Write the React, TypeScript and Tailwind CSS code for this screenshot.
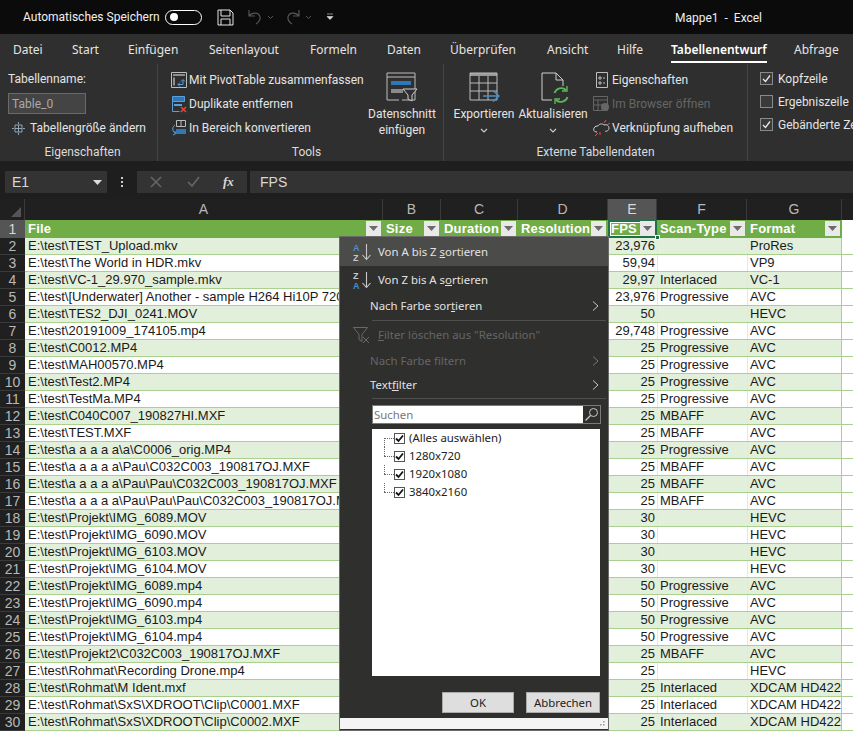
import type { ReactNode } from "react";

const noto = "font-['Noto_Sans',sans-serif]";
const ui = "font-['Roboto',sans-serif]";

type Row = { n: number; file: string; fps: string; scan: string; format: string };

const rows: Row[] = [
  { n: 2, file: "E:\\test\\TEST_Upload.mkv", fps: "23,976", scan: "", format: "ProRes" },
  { n: 3, file: "E:\\test\\The World in HDR.mkv", fps: "59,94", scan: "", format: "VP9" },
  { n: 4, file: "E:\\test\\VC-1_29.970_sample.mkv", fps: "29,97", scan: "Interlaced", format: "VC-1" },
  { n: 5, file: "E:\\test\\[Underwater] Another - sample H264 Hi10P 720p.mkv", fps: "23,976", scan: "Progressive", format: "AVC" },
  { n: 6, file: "E:\\test\\TES2_DJI_0241.MOV", fps: "50", scan: "", format: "HEVC" },
  { n: 7, file: "E:\\test\\20191009_174105.mp4", fps: "29,748", scan: "Progressive", format: "AVC" },
  { n: 8, file: "E:\\test\\C0012.MP4", fps: "25", scan: "Progressive", format: "AVC" },
  { n: 9, file: "E:\\test\\MAH00570.MP4", fps: "25", scan: "Progressive", format: "AVC" },
  { n: 10, file: "E:\\test\\Test2.MP4", fps: "25", scan: "Progressive", format: "AVC" },
  { n: 11, file: "E:\\test\\TestMa.MP4", fps: "25", scan: "Progressive", format: "AVC" },
  { n: 12, file: "E:\\test\\C040C007_190827HI.MXF", fps: "25", scan: "MBAFF", format: "AVC" },
  { n: 13, file: "E:\\test\\TEST.MXF", fps: "25", scan: "MBAFF", format: "AVC" },
  { n: 14, file: "E:\\test\\a a a a a\\a\\C0006_orig.MP4", fps: "25", scan: "Progressive", format: "AVC" },
  { n: 15, file: "E:\\test\\a a a a a\\Pau\\C032C003_190817OJ.MXF", fps: "25", scan: "MBAFF", format: "AVC" },
  { n: 16, file: "E:\\test\\a a a a a\\Pau\\Pau\\C032C003_190817OJ.MXF", fps: "25", scan: "MBAFF", format: "AVC" },
  { n: 17, file: "E:\\test\\a a a a a\\Pau\\Pau\\Pau\\C032C003_190817OJ.MXF", fps: "25", scan: "MBAFF", format: "AVC" },
  { n: 18, file: "E:\\test\\Projekt\\IMG_6089.MOV", fps: "30", scan: "", format: "HEVC" },
  { n: 19, file: "E:\\test\\Projekt\\IMG_6090.MOV", fps: "30", scan: "", format: "HEVC" },
  { n: 20, file: "E:\\test\\Projekt\\IMG_6103.MOV", fps: "30", scan: "", format: "HEVC" },
  { n: 21, file: "E:\\test\\Projekt\\IMG_6104.MOV", fps: "30", scan: "", format: "HEVC" },
  { n: 22, file: "E:\\test\\Projekt\\IMG_6089.mp4", fps: "50", scan: "Progressive", format: "AVC" },
  { n: 23, file: "E:\\test\\Projekt\\IMG_6090.mp4", fps: "50", scan: "Progressive", format: "AVC" },
  { n: 24, file: "E:\\test\\Projekt\\IMG_6103.mp4", fps: "50", scan: "Progressive", format: "AVC" },
  { n: 25, file: "E:\\test\\Projekt\\IMG_6104.mp4", fps: "50", scan: "Progressive", format: "AVC" },
  { n: 26, file: "E:\\test\\Projekt2\\C032C003_190817OJ.MXF", fps: "25", scan: "MBAFF", format: "AVC" },
  { n: 27, file: "E:\\test\\Rohmat\\Recording Drone.mp4", fps: "25", scan: "", format: "HEVC" },
  { n: 28, file: "E:\\test\\Rohmat\\M Ident.mxf", fps: "25", scan: "Interlaced", format: "XDCAM HD422" },
  { n: 29, file: "E:\\test\\Rohmat\\SxS\\XDROOT\\Clip\\C0001.MXF", fps: "25", scan: "Interlaced", format: "XDCAM HD422" },
  { n: 30, file: "E:\\test\\Rohmat\\SxS\\XDROOT\\Clip\\C0002.MXF", fps: "25", scan: "Interlaced", format: "XDCAM HD422" },
];

const tabs = [
  { label: "Datei", w: "w-[59px]" },
  { label: "Start", w: "w-[56px]" },
  { label: "Einfügen", w: "w-[81px]" },
  { label: "Seitenlayout", w: "w-[101px]" },
  { label: "Formeln", w: "w-[77px]" },
  { label: "Daten", w: "w-[63px]" },
  { label: "Überprüfen", w: "w-[97px]" },
  { label: "Ansicht", w: "w-[70px]" },
  { label: "Hilfe", w: "w-[54px]" },
  { label: "Tabellenentwurf", w: "w-[123px]", active: true },
  { label: "Abfrage", w: "w-[59px]" },
];

const columns = [
  { label: "A", w: "w-[358px]" },
  { label: "B", w: "w-[58px]" },
  { label: "C", w: "w-[77px]" },
  { label: "D", w: "w-[90px]" },
  { label: "E", w: "w-[49px]", active: true },
  { label: "F", w: "w-[90px]" },
  { label: "G", w: "w-[95px]" },
];

const FilterButton = () => (
  <span className="absolute right-[2px] top-[1px] flex h-[15px] w-[15px] items-center justify-center bg-[#e9e9e9]">
    <svg width="9" height="5" viewBox="0 0 9 5">
      <path d="M0 0h9L4.5 5z" fill="#6b6b6b" />
    </svg>
  </span>
);

const HeaderCell = ({ label, w, selected }: { label: string; w: string; selected?: boolean }) => (
  <div
    className={`relative flex h-full ${w} items-center overflow-hidden pl-[3px] text-[13px] font-bold tracking-[0.2px] text-white ${
      selected ? "shadow-[inset_0_0_0_2px_#1f7246,inset_0_0_0_3px_#ffffff]" : ""
    }`}
  >
    {label}
    <FilterButton />
  </div>
);

const ToolRow = ({ icon, children, dim }: { icon: ReactNode; children: ReactNode; dim?: boolean }) => (
  <div className={`flex h-[24px] items-center gap-[2px] whitespace-nowrap ${dim ? "text-[#666]" : ""}`}>
    <span className="flex w-[17px] justify-center">{icon}</span>
    {children}
  </div>
);

const RibbonCheck = ({ label, checked }: { label: string; checked: boolean }) => (
  <div className="flex h-[23px] items-center gap-[5px] whitespace-nowrap">
    <span className="flex h-[13px] w-[13px] items-center justify-center border border-[#8a8a8a] bg-[#3a3a3a]">
      {checked && (
        <svg width="11" height="11" viewBox="0 0 11 11">
          <path d="M2 6l2.5 2.5L9 2.5" fill="none" stroke="#e8e8e8" strokeWidth="1.3" />
        </svg>
      )}
    </span>
    {label}
  </div>
);

const GroupLabel = ({ children }: { children: ReactNode }) => (
  <div className="mt-auto text-center text-[12px] leading-[18px] text-[#dcdcdc]">{children}</div>
);

const Chevron = () => (
  <svg width="8" height="5" viewBox="0 0 8 5" className="mt-[6px]">
    <path d="M1 1l3 3 3-3" fill="none" stroke="#cfcfcf" strokeWidth="1.1" />
  </svg>
);

const MenuChevron = ({ dim }: { dim?: boolean }) => (
  <svg width="7" height="11" viewBox="0 0 7 11" className="absolute right-[9px] top-1/2 -translate-y-1/2">
    <path d="M1 1l5 4.5L1 10" fill="none" stroke={dim ? "#777" : "#c8c8c8"} strokeWidth="1" />
  </svg>
);

const SortIcon = ({ top, bottom }: { top: string; bottom: string }) => (
  <svg width="22" height="20" viewBox="0 0 22 20" className="absolute left-[12px] top-1/2 -translate-y-1/2">
    <text x="1" y="8.5" fontSize="9" fontWeight="700" fontFamily="Liberation Sans" fill={top === "A" ? "#4a90c8" : "#c8c8c8"}>
      {top}
    </text>
    <text x="1" y="18.5" fontSize="9" fontWeight="700" fontFamily="Liberation Sans" fill={bottom === "A" ? "#4a90c8" : "#c8c8c8"}>
      {bottom}
    </text>
    <path d="M14.500 2v15M10.500 13l4 4.500 4-4.500" fill="none" stroke="#c8c8c8" strokeWidth="1.1" />
  </svg>
);

const ListCheck = ({ label, first }: { label: string; first?: boolean }) => (
  <div className="relative flex h-[18px] items-center pl-[22px]">
    <span className="absolute left-[12px] top-1/2 w-[10px] border-t border-dotted border-[#666]" />
    <span className={`absolute left-[12px] border-l border-dotted border-[#666] ${first ? "top-1/2 h-[9px]" : "top-0 h-[9px]"}`} />
    <span className="flex h-[11px] w-[11px] items-center justify-center border border-[#555] bg-white">
      <svg width="9" height="9" viewBox="0 0 9 9">
        <path d="M1 4.500L3.500 7 8 1.500" fill="none" stroke="#111" strokeWidth="1.8" />
      </svg>
    </span>
    <span className="ml-[4px]">{label}</span>
  </div>
);

const FilterMenu = () => (
  <div
    className={`${noto} absolute left-[340px] top-[237px] flex h-[493px] w-[268px] flex-col bg-[#2f2f2e] text-[11.4px] text-[#e2e2e2] shadow-[0_0_0_1px_#6a6a6a]`}
  >
    <div className="relative flex h-[29px] items-center bg-[#4b4b4a] pl-[38px]">
      <SortIcon top="A" bottom="Z" />
      <span>
        Von A bis Z <u>s</u>ortieren
      </span>
    </div>
    <div className="relative flex h-[28px] items-center pl-[38px]">
      <SortIcon top="Z" bottom="A" />
      <span>
        Von Z bis A s<u>o</u>rtieren
      </span>
    </div>
    <div className="relative flex h-[24px] items-center pl-[30px]">
      <span>
        Nach Farbe sor<u>t</u>ieren
      </span>
      <MenuChevron />
    </div>
    <div className="ml-[32px] mr-[2px] mt-[2px] border-t border-[#4f4f4f]" />
    <div className="relative flex h-[28px] items-center pl-[38px] text-[#666]">
      <svg width="18" height="18" viewBox="0 0 18 18" className="absolute left-[13px] top-[6px]">
        <path d="M.5.5h14L9 7.500v7l-3-2v-5z" fill="none" stroke="#6a6a6a" />
        <path d="M10 10l6 6m0-6l-6 6" fill="none" stroke="#6a6a6a" />
      </svg>
      <span>
        <u>F</u>ilter löschen aus "Resolution"
      </span>
    </div>
    <div className="relative flex h-[24px] items-center pl-[30px] text-[#666]">
      <span>
        Nach Farbe f<u>i</u>ltern
      </span>
      <MenuChevron dim />
    </div>
    <div className="relative flex h-[24px] items-center pl-[30px]">
      <span>
        Text<u>f</u>ilter
      </span>
      <MenuChevron />
    </div>
    <div className="ml-[32px] mr-[2px] mt-[1px] border-t border-[#4f4f4f]" />
    <div className="ml-[32px] mt-[6px] flex h-[19px] w-[229px] items-center border border-[#7a7a7a] bg-white pl-[1px] text-[#777]">
      <span className="flex-1">Suchen</span>
      <span className="flex h-full w-[17px] items-center justify-center bg-[#2f2f2e]">
        <svg width="15" height="15" viewBox="0 0 15 15">
          <circle cx="9.500" cy="5.500" r="4" fill="none" stroke="#c8c8c8" />
          <path d="M6.500 8.500L1.500 13.500" fill="none" stroke="#c8c8c8" strokeWidth="1.3" />
        </svg>
      </span>
    </div>
    <div className="ml-[32px] mt-[5px] h-[247px] w-[228px] bg-white text-[#222]">
      <ListCheck label="(Alles auswählen)" first />
      <ListCheck label="1280x720" />
      <ListCheck label="1920x1080" />
      <ListCheck label="3840x2160" />
    </div>
    <div className="mt-[16px] flex justify-end gap-[12px] pr-[8px] text-[#222]">
      <div className="flex h-[21px] w-[72px] items-center justify-center border border-[#aaa] bg-[#dedede]">OK</div>
      <div className="flex h-[21px] w-[74px] items-center justify-center border border-[#aaa] bg-[#dedede]">Abbrechen</div>
    </div>
    <div className="relative mt-auto mb-[1px] h-[11px] bg-[#f4f4f4]">
      <svg width="9" height="8" viewBox="0 0 9 8" className="absolute bottom-[1px] right-[2px]">
        <path d="M6 1h1.500v1.500H6zM3 4h1.500v1.500H3zM6 4h1.500v1.500H6z" fill="#999" />
      </svg>
    </div>
  </div>
);

const App = () => {
  return (
    <div className={`${ui} relative h-[731px] w-[853px] overflow-hidden bg-[#202020] text-[12px] text-[#e4e4e4]`}>
      {/* Titelleiste */}
      <div className="relative flex h-[34px] items-center bg-[#0b0b0b] pl-[23px] text-[#f0f0f0]">
        <span className="w-[142px] whitespace-nowrap">Automatisches Speichern</span>
        <span className="flex h-[15px] w-[37px] items-center rounded-full border border-white pl-[4px]">
          <span className="h-[8px] w-[8px] rounded-full bg-white" />
        </span>
        <svg width="17" height="17" viewBox="0 0 17 17" className="ml-[15px]">
          <path d="M1 1h12l3 3v12H1zM4 1v6h9V1M4 16v-6h9v6" fill="none" stroke="#e6e6e6" />
        </svg>
        <svg width="16" height="16" viewBox="0 0 16 16" className="ml-[13px]">
          <path d="M2 1v6h6M2 7c3-4 10-4 11 1 .6 3-1 5-4 7" fill="none" stroke="#555" strokeWidth="1.2" />
        </svg>
        <svg width="7" height="5" viewBox="0 0 7 5" className="ml-[4px]">
          <path d="M1 1l2.500 2.500L6 1" fill="none" stroke="#555" />
        </svg>
        <svg width="16" height="16" viewBox="0 0 16 16" className="ml-[11px]">
          <path d="M14 1v6H8M14 7C11 3 4 3 3 8c-.6 3 1 5 4 7" fill="none" stroke="#555" strokeWidth="1.2" />
        </svg>
        <svg width="7" height="5" viewBox="0 0 7 5" className="ml-[4px]">
          <path d="M1 1l2.500 2.500L6 1" fill="none" stroke="#555" />
        </svg>
        <svg width="8" height="8" viewBox="0 0 8 8" className="ml-[14px]">
          <path d="M1 1h6M1 3.500h6L4 6.500z" fill="#ddd" stroke="#ddd" strokeWidth="0.6" />
        </svg>
        <span className="absolute left-[675px] top-[9px] whitespace-nowrap text-[#eee]">Mappe1 &nbsp;-&nbsp; Excel</span>
      </div>

      {/* Registerkarten */}
      <div className={`${noto} flex h-[30px] items-center bg-[#2f2f2f] pl-[13px] pt-[2px]`}>
        {tabs.map((tab) => (
          <div key={tab.label} className={`${tab.w} shrink-0 whitespace-nowrap`}>
            <span className={`relative inline-block ${tab.active ? "font-semibold text-white" : ""}`}>
              {tab.label}
              {tab.active && <span className="absolute -bottom-[4px] left-0 h-[2px] w-full bg-white" />}
            </span>
          </div>
        ))}
      </div>

      {/* Menüband */}
      <div className="flex h-[97px] bg-[#2f2f2f]">
        <div className="flex w-[158px] shrink-0 flex-col border-r border-[#454545] pl-[8px]">
          <div className="flex h-[29px] items-center">Tabellenname:</div>
          <div className="flex h-[21px] w-[78px] items-center border border-[#6a6a6a] bg-[#444] pl-[3px] text-[#aaa]">Table_0</div>
          <div className="mt-[2px] flex h-[24px] items-center gap-[5px] pl-[4px]">
            <svg width="13" height="13" viewBox="0 0 13 13">
              <path d="M3 3h7v7H3zM6.500 3v7M3 6.500h7M6.500 0v2M6.500 11v2M0 6.500h2M11 6.500h2" fill="none" stroke="#9ab0c4" strokeWidth="0.9" />
            </svg>
            Tabellengröße ändern
          </div>
          <GroupLabel>Eigenschaften</GroupLabel>
        </div>

        <div className="flex w-[286px] shrink-0 flex-col border-r border-[#454545] pl-[12px]">
          <div className="flex flex-1 pt-[4px]">
            <div className="w-[197px]">
              <ToolRow
                icon={
                  <svg width="16" height="16" viewBox="0 0 16 16">
                    <path d="M.5.5h15v15H.5z" fill="none" stroke="#bdbdbd" />
                    <path d="M2 2h12v2H2zM2 5.500h2v8H2z" fill="#8e8e8e" />
                    <path d="M7 12.500h5V8m-2 1.500l2-2 2 2M9 10.500l-2 2 2 2" fill="none" stroke="#5aa0d8" />
                  </svg>
                }
              >
                Mit PivotTable zusammenfassen
              </ToolRow>
              <ToolRow
                icon={
                  <svg width="16" height="17" viewBox="0 0 16 17">
                    <path d="M1.500.5h12v5h-12z" fill="#2f77b8" stroke="#5aa0d8" />
                    <path d="M1.500 5.500v10h7" fill="none" stroke="#5aa0d8" />
                    <path d="M3 8h8v2H3z" fill="#5aa0d8" />
                    <path d="M10 11l5 5m0-5l-5 5" stroke="#e04a3a" strokeWidth="1.500" />
                  </svg>
                }
              >
                Duplikate entfernen
              </ToolRow>
              <ToolRow
                icon={
                  <svg width="16" height="16" viewBox="0 0 16 16">
                    <path d="M5.500.5h9v6h-9zM10 .5v6" fill="none" stroke="#bdbdbd" />
                    <path d="M5 9h10v5H5z" fill="#2f77b8" />
                    <path d="M4 5C1 7 1 11 4 13m-2 2l3-1.500L3.500 11" fill="none" stroke="#5aa0d8" />
                  </svg>
                }
              >
                In Bereich konvertieren
              </ToolRow>
            </div>
            <div className="flex w-[70px] flex-col items-center pt-[4px] text-center leading-[16px]">
              <svg width="32" height="30" viewBox="0 0 32 30" className="mb-[4px]">
                <path d="M1 1h28v27H16M1 28V1M1 5h28" fill="none" stroke="#bdbdbd" />
                <path d="M1 28h12" stroke="#bdbdbd" />
                <path d="M5 9h20v4H5z" fill="#2f77b8" />
                <path d="M5 17h12v4H5z" fill="#8a8a8a" />
                <path d="M17 17h14l-5 6v6l-4-2v-4z" fill="#2f2f2f" stroke="#d0d0d0" />
              </svg>
              <span className="whitespace-nowrap">Datenschnitt</span>
              <span>einfügen</span>
            </div>
          </div>
          <GroupLabel>Tools</GroupLabel>
        </div>

        <div className="flex w-[304px] shrink-0 flex-col border-r border-[#454545]">
          <div className="flex flex-1">
            <div className="ml-[5px] flex w-[70px] flex-col items-center pt-[8px] leading-[16px]">
              <svg width="32" height="32" viewBox="0 0 32 32" className="mb-[2px]">
                <path d="M2 1h27v3H2z" fill="#9a9a9a" />
                <path d="M2 1h27v27H2zM2 11h27M2 19h27M11 4v24M20 4v24" fill="none" stroke="#bdbdbd" />
                <path d="M15 24h16m-6-5.500l6 5.500-6 5.500" fill="none" stroke="#4a90c8" strokeWidth="1.400" />
              </svg>
              <span>Exportieren</span>
              <Chevron />
            </div>
            <div className="flex w-[68px] flex-col items-center pt-[8px] leading-[16px]">
              <svg width="32" height="32" viewBox="0 0 32 32" className="mb-[2px]">
                <path d="M5 15V1h14l7 7v6M5 15v13h10M19 1v7h7" fill="none" stroke="#d0d0d0" />
                <path d="M17.500 21a7 7 0 0 1 11.500-3M30.500 25a7 7 0 0 1-11.500 3" fill="none" stroke="#5cb85c" strokeWidth="1.800" />
                <path d="M30 14v5h-5M18 32v-5h5" fill="none" stroke="#5cb85c" strokeWidth="1.400" />
              </svg>
              <span>Aktualisieren</span>
              <Chevron />
            </div>
            <div className="pl-[6px] pt-[4px]">
              <ToolRow
                icon={
                  <svg width="12" height="16" viewBox="0 0 12 16">
                    <path d="M.5.5h11v15H.5zM3 5h2v2H3zM3 10h2v2H3zM7 6h2M7 11h2" fill="none" stroke="#bdbdbd" />
                  </svg>
                }
              >
                Eigenschaften
              </ToolRow>
              <ToolRow
                dim
                icon={
                  <svg width="17" height="16" viewBox="0 0 17 16">
                    <path d="M.5.5h14v14H.5zM.5 4h14M5 4v10M.5 9H10" fill="none" stroke="#666" />
                    <circle cx="12" cy="11" r="4" fill="#666" />
                  </svg>
                }
              >
                Im Browser öffnen
              </ToolRow>
              <ToolRow
                icon={
                  <svg width="17" height="17" viewBox="0 0 17 17">
                    <path d="M4 12C1 12 0 10 1 8c1-2 3-2 4-2 1-2 4-3 6-1 3-1 5 1 5 3 0 2-2 4-4 3" fill="none" stroke="#d0d0d0" />
                    <path d="M2 16l3-3M7 15v-3M11 3l2-3M14 5l3-2" stroke="#d9534f" />
                  </svg>
                }
              >
                Verknüpfung aufheben
              </ToolRow>
            </div>
          </div>
          <GroupLabel>Externe Tabellendaten</GroupLabel>
        </div>

        <div className="flex-1 overflow-hidden pl-[12px] pt-[3px]">
          <RibbonCheck label="Kopfzeile" checked />
          <RibbonCheck label="Ergebniszeile" checked={false} />
          <RibbonCheck label="Gebänderte Zeilen" checked />
        </div>
      </div>

      {/* Bearbeitungsleiste */}
      <div className="flex h-[38px] items-start bg-[#1e1e1e] pt-[10px] font-['Liberation_Sans',sans-serif] text-[14px] text-[#d8d8d8]">
        <div className="ml-[5px] flex h-[22px] w-[102px] items-center justify-between bg-[#333] pl-[7px] pr-[5px]">
          E1
          <svg width="9" height="5" viewBox="0 0 9 5">
            <path d="M0 0h9L4.500 5z" fill="#ddd" />
          </svg>
        </div>
        <div className="flex h-[22px] w-[30px] flex-col items-center justify-center gap-[2px]">
          <span className="h-[2px] w-[2px] bg-[#ccc]" />
          <span className="h-[2px] w-[2px] bg-[#ccc]" />
          <span className="h-[2px] w-[2px] bg-[#ccc]" />
        </div>
        <div className="flex h-[22px] w-[110px] items-center bg-[#333]">
          <svg width="12" height="12" viewBox="0 0 12 12" className="ml-[13px]">
            <path d="M1 1l10 10M11 1L1 11" stroke="#666" strokeWidth="1.600" />
          </svg>
          <svg width="13" height="12" viewBox="0 0 13 12" className="ml-[25px]">
            <path d="M1 6l4 4 7-9" fill="none" stroke="#666" strokeWidth="1.600" />
          </svg>
          <span className="ml-[23px] font-['Liberation_Serif',serif] text-[13px] font-bold italic text-[#d8d8d8]">fx</span>
        </div>
        <div className="ml-[3px] flex h-[22px] flex-1 items-center bg-[#333] pl-[10px]">FPS</div>
      </div>

      {/* Spaltenköpfe */}
      <div className="flex h-[21px] bg-[#202020] font-['Liberation_Sans',sans-serif] text-[14px] text-[#b8b8b8]">
        <div className="relative w-[25px] shrink-0 border-r border-[#3a3a3a]">
          <svg width="10" height="10" viewBox="0 0 10 10" className="absolute bottom-[3px] right-[3px]">
            <path d="M10 0v10H0z" fill="#555" />
          </svg>
        </div>
        {columns.map((col) => (
          <div
            key={col.label}
            className={`flex ${col.w} shrink-0 items-center justify-center border-r border-[#3a3a3a] ${
              col.active ? "bg-[#555] text-[#d8d8d8]" : ""
            }`}
          >
            {col.label}
          </div>
        ))}
      </div>

      {/* Tabelle */}
      <div className="relative font-['Liberation_Sans',sans-serif] text-[13px] leading-[16px] text-[#1a1a1a]">
        <div className="flex h-[18px]">
          <div className="flex w-[25px] shrink-0 items-center justify-center bg-[#555] text-[14px] text-[#d8d8d8]">1</div>
          <div className="flex flex-1 bg-[#70ad47]">
            <HeaderCell label="File" w="w-[358px]" />
            <HeaderCell label="Size" w="w-[58px]" />
            <HeaderCell label="Duration" w="w-[77px]" />
            <HeaderCell label="Resolution" w="w-[90px]" />
            <HeaderCell label="FPS" w="w-[49px]" selected />
            <HeaderCell label="Scan-Type" w="w-[90px]" />
            <HeaderCell label="Format" w="w-[95px]" />
            <div className="flex-1 bg-white" />
          </div>
        </div>
        {rows.map((row) => (
          <div key={row.n} className="flex h-[17px]">
            <div className="flex w-[25px] shrink-0 items-center justify-center border-b border-[#3a3a3a] bg-[#202020] text-[14px] text-[#b8b8b8]">
              {row.n}
            </div>
            <div className={`flex flex-1 border-b border-[#a9d08e] ${row.n % 2 === 0 ? "bg-[#e2efda]" : "bg-white"}`}>
              <div className="w-[358px] shrink-0 overflow-hidden whitespace-nowrap pl-[3px]">{row.file}</div>
              <div className="w-[58px] shrink-0" />
              <div className="w-[77px] shrink-0" />
              <div className="w-[90px] shrink-0" />
              <div className="w-[49px] shrink-0 pr-[2px] text-right">{row.fps}</div>
              <div className="w-[90px] shrink-0 whitespace-nowrap border-l border-[#e6e6e6] pl-[2px]">{row.scan}</div>
              <div className="w-[95px] shrink-0 whitespace-nowrap border-x border-l-[#e6e6e6] border-r-[#a9d08e] pl-[2px]">{row.format}</div>
              <div className="flex-1 bg-white" />
            </div>
          </div>
        ))}
        <span className="absolute left-[655px] top-[15px] h-[5px] w-[5px] border border-white bg-[#1f7246]" />
      </div>

      <FilterMenu />
    </div>
  );
};

export default App;
